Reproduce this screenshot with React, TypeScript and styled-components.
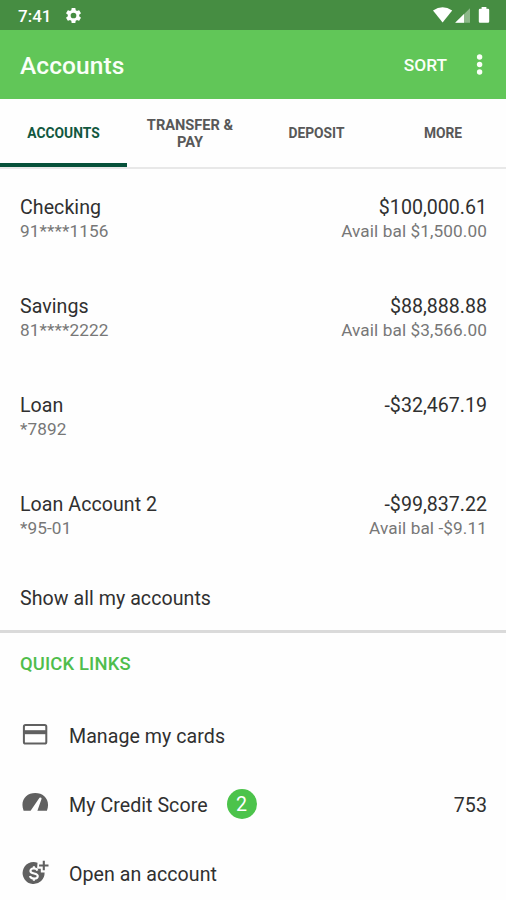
import React from "react";
import styled, { createGlobalStyle } from "styled-components";

const GlobalStyle = createGlobalStyle`
  * { box-sizing: border-box; }
  body { margin: 0; background: #fefefe; }
`;

const Screen = styled.main`
  width: 506px;
  height: 900px;
  overflow: hidden;
  display: flex;
  flex-direction: column;
  background: #fefefe;
  color: #303030;
  font-family: Roboto, sans-serif;
`;

const StatusBar = styled.div`
  height: 30px;
  flex: none;
  display: flex;
  align-items: center;
  padding: 0 15px 0 18px;
  background: #468d42;
  color: #fff;
`;

const Clock = styled.span`
  width: 46px;
  padding-top: 1px;
  font-size: 17px;
  font-weight: 500;
`;

const StatusIcons = styled.div`
  display: flex;
  align-items: center;
  margin-left: auto;
`;

const AppBar = styled.header`
  height: 69px;
  flex: none;
  display: flex;
  align-items: center;
  padding: 1px 16px 0 20px;
  background: #61c658;
  color: #fafff8;
`;

const Title = styled.h1`
  margin: 0;
  padding-top: 1px;
  flex: 1;
  font-size: 24.5px;
  font-weight: 500;
  letter-spacing: 0.1px;
`;

const BarButton = styled.button`
  display: flex;
  margin: 0;
  padding: 0;
  border: 0;
  background: none;
  color: inherit;
  font: 500 17.3px Roboto, sans-serif;
`;

const SortButton = styled(BarButton)`
  margin-right: 23px;
`;

const Tabs = styled.nav`
  height: 70px;
  flex: none;
  display: grid;
  grid-template-columns: 127px 126px 127px 126px;
  border-bottom: 2px solid #e8e8e8;
`;

const Tab = styled.a<{ $active?: boolean; $wide?: boolean }>`
  display: flex;
  align-items: center;
  justify-content: center;
  padding: ${({ $active }) => ($active ? "6px 20px 0" : "2px 15px 0")};
  border-bottom: ${({ $active }) => ($active ? "4px solid #06513a" : "0")};
  color: ${({ $active }) => ($active ? "#12583f" : "#585858")};
  font-size: ${({ $wide }) => ($wide ? "14.6px" : "13.8px")};
  font-weight: 700;
  line-height: 17.5px;
  text-align: center;
`;

const AccountList = styled.ul`
  margin: 0;
  padding: 25px 19px 0 20px;
  list-style: none;
`;

const AccountRow = styled.li`
  height: 99px;
  display: flex;
  justify-content: space-between;
`;

const Column = styled.div<{ $end?: boolean }>`
  text-align: ${({ $end }) => ($end ? "right" : "left")};
  letter-spacing: ${({ $end }) => ($end ? "0" : "0.05px")};
`;

const Primary = styled.div`
  height: 25px;
  font-size: 19.6px;
  line-height: 27px;
  white-space: nowrap;
`;

const Secondary = styled.div`
  color: #777;
  font-size: 17.2px;
  line-height: 25px;
  letter-spacing: 0.1px;
  white-space: nowrap;
`;

const ShowAll = styled.a`
  height: 43px;
  flex: none;
  padding: 0 20px;
  font-size: 19.6px;
  line-height: 24px;
  letter-spacing: 0.05px;
  margin-top: -3px;
`;

const QuickLinks = styled.section`
  flex: none;
  border-top: 3px solid #dadada;
`;

const SectionTitle = styled.h2`
  height: 67px;
  margin: 0;
  padding: 18px 20px 0;
  color: #4fbd4c;
  font-size: 18.4px;
  line-height: 25px;
  font-weight: 500;
  letter-spacing: 0.15px;
`;

const LinkRow = styled.a`
  height: 69px;
  display: flex;
  align-items: center;
  padding: 0 19px 0 20px;
  font-size: 19.6px;
  letter-spacing: 0.05px;
`;

const IconSlot = styled.span`
  width: 49px;
  height: 30px;
  display: flex;
`;

const Badge = styled.span`
  width: 30px;
  height: 30px;
  margin-left: 19px;
  padding-top: 1px;
  display: flex;
  align-items: center;
  justify-content: center;
  border-radius: 50%;
  background: #4cc34b;
  color: #fff;
`;

const Label = styled.span`
  padding-top: 3px;
`;

const Score = styled(Label)`
  margin-left: auto;
`;

const GEAR =
  "M19.14 12.94c.04-.3.06-.61.06-.94 0-.32-.02-.64-.07-.94l2.03-1.58a.49.49 0 0 0 .12-.61l-1.92-3.32a.49.49 0 0 0-.59-.22l-2.39.96c-.5-.38-1.03-.7-1.62-.94l-.36-2.54a.48.48 0 0 0-.48-.41h-3.84a.48.48 0 0 0-.47.41l-.36 2.54c-.59.24-1.13.57-1.62.94l-2.39-.96a.48.48 0 0 0-.59.22L2.74 8.87a.48.48 0 0 0 .12.61l2.03 1.58c-.05.3-.09.63-.09.94s.02.64.07.94l-2.03 1.58a.49.49 0 0 0-.12.61l1.92 3.32c.12.22.37.29.59.22l2.39-.96c.5.38 1.03.7 1.62.94l.36 2.54c.05.24.24.41.48.41h3.84c.24 0 .44-.17.47-.41l.36-2.54c.59-.24 1.13-.56 1.62-.94l2.39.96c.22.08.47 0 .59-.22l1.92-3.32a.48.48 0 0 0-.12-.61zM12 15.6A3.6 3.6 0 1 1 12 8.4a3.6 3.6 0 0 1 0 7.2z";

const GearIcon = () => (
  <svg width="19" height="19" viewBox="0 0 24 24" fill="#fff">
    <path d={GEAR} />
  </svg>
);

const SignalIcons = () => (
  <svg width="58" height="20" viewBox="0 0 58 20" fill="#fff">
    <path d="M0 5.4Q9.6-.8 19.2 5.4L9.6 17.4Z" />
    <path d="M37 3.2V17.7H22.2Z" fillOpacity=".38" />
    <path d="M31 9V17.7H22.2Z" />
    <path d="M48.6 2h4.8v1.7H55a1.2 1.2 0 0 1 1.2 1.2v11.6a1.2 1.2 0 0 1-1.2 1.2h-8a1.2 1.2 0 0 1-1.2-1.2V4.9A1.2 1.2 0 0 1 47 3.7h1.6Z" />
  </svg>
);

const MoreIcon = () => (
  <svg width="20" height="24" viewBox="0 0 20 24" fill="currentColor">
    <circle cx="9.6" cy="4" r="2.7" />
    <circle cx="9.6" cy="11.5" r="2.7" />
    <circle cx="9.6" cy="19" r="2.7" />
  </svg>
);

const CardIcon = () => (
  <svg width="30" height="30" viewBox="0 0 30 30" fill="none" stroke="#606060">
    <rect x="3.9" y="5.1" width="22.4" height="18.5" rx="1.6" strokeWidth="2" />
    <path d="M4 12.2h22.2" strokeWidth="4" />
  </svg>
);

const GaugeIcon = () => (
  <svg width="30" height="30" viewBox="0 0 30 30" fill="#606060">
    <path d="M3.6 21.8C-.3 11.3 6.2 4 15.2 4S30.8 11.3 26.9 21.8H17.4L21.6 9.8Q21.3 7.9 19.5 8.8L10.6 21.8Z" />
  </svg>
);

const OpenAccountIcon = () => (
  <svg width="30" height="30" viewBox="0 0 30 30" fill="none">
    <path d="M17.5 4.7A11 11 0 1 0 24.6 14.6H20.8V10.7H17.1Z" fill="#606060" />
    <path d="M23.8 2.8v9.4M19.1 7.5h9.4" stroke="#606060" strokeWidth="2.1" />
    <path
      d="M17.4 12.6c-.5-1.5-1.7-2.2-3.6-2.2-2 0-3.4.9-3.4 2.5 0 3.5 7.4 1.6 7.4 5.1 0 1.7-1.5 2.6-3.7 2.6s-3.7-.9-4.1-2.6M13.9 8.2v2.4M13.9 20.3v2.5"
      stroke="#fefefe"
      strokeWidth="2.1"
    />
  </svg>
);

interface Account {
  name: string;
  number: string;
  balance: string;
  available?: string;
}

const accounts: Account[] = [
  { name: "Checking", number: "91****1156", balance: "$100,000.61", available: "Avail bal $1,500.00" },
  { name: "Savings", number: "81****2222", balance: "$88,888.88", available: "Avail bal $3,566.00" },
  { name: "Loan", number: "*7892", balance: "-$32,467.19" },
  { name: "Loan Account 2", number: "*95-01", balance: "-$99,837.22", available: "Avail bal -$9.11" },
];

export default function App() {
  return (
    <Screen>
      <GlobalStyle />
      <StatusBar>
        <Clock>7:41</Clock>
        <GearIcon />
        <StatusIcons>
          <SignalIcons />
        </StatusIcons>
      </StatusBar>
      <AppBar>
        <Title>Accounts</Title>
        <SortButton>SORT</SortButton>
        <BarButton aria-label="More options">
          <MoreIcon />
        </BarButton>
      </AppBar>
      <Tabs>
        <Tab $active>ACCOUNTS</Tab>
        <Tab $wide>TRANSFER &amp; PAY</Tab>
        <Tab>DEPOSIT</Tab>
        <Tab>MORE</Tab>
      </Tabs>
      <AccountList>
        {accounts.map((account) => (
          <AccountRow key={account.name}>
            <Column>
              <Primary>{account.name}</Primary>
              <Secondary>{account.number}</Secondary>
            </Column>
            <Column $end>
              <Primary>{account.balance}</Primary>
              {account.available && <Secondary>{account.available}</Secondary>}
            </Column>
          </AccountRow>
        ))}
      </AccountList>
      <ShowAll>Show all my accounts</ShowAll>
      <QuickLinks>
        <SectionTitle>QUICK LINKS</SectionTitle>
        <LinkRow>
          <IconSlot><CardIcon /></IconSlot>
          <Label>Manage my cards</Label>
        </LinkRow>
        <LinkRow>
          <IconSlot><GaugeIcon /></IconSlot>
          <Label>My Credit Score</Label>
          <Badge>2</Badge>
          <Score>753</Score>
        </LinkRow>
        <LinkRow>
          <IconSlot><OpenAccountIcon /></IconSlot>
          <Label>Open an account</Label>
        </LinkRow>
      </QuickLinks>
    </Screen>
  );
}
